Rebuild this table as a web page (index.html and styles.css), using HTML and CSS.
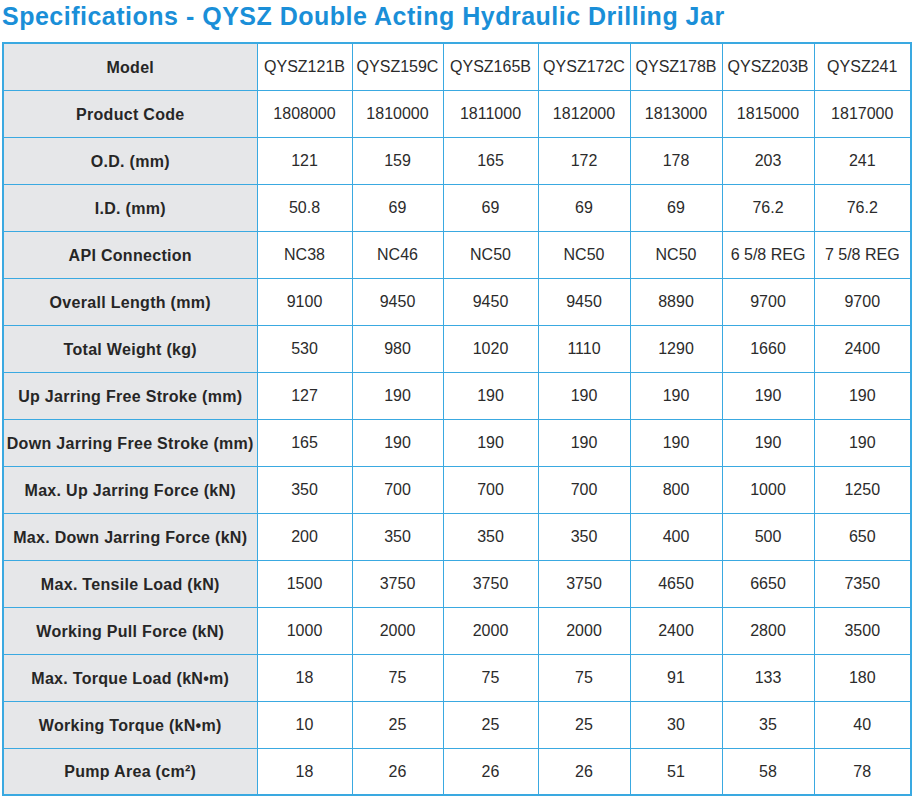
FILE: index.html
```html
<!DOCTYPE html>
<html>
<head>
<meta charset="utf-8">
<link rel="stylesheet" href="styles.css">
</head>
<body>
<h1 class="title">Specifications - QYSZ Double Acting Hydraulic Drilling Jar</h1>
<table class="spec">
<colgroup>
<col class="c-label"><col class="c1"><col class="c2"><col class="c3"><col class="c4"><col class="c5"><col class="c6"><col class="c7">
</colgroup>
<tbody>
<tr><th>Model</th><td>QYSZ121B</td><td>QYSZ159C</td><td>QYSZ165B</td><td>QYSZ172C</td><td>QYSZ178B</td><td>QYSZ203B</td><td>QYSZ241</td></tr>
<tr><th>Product Code</th><td>1808000</td><td>1810000</td><td>1811000</td><td>1812000</td><td>1813000</td><td>1815000</td><td>1817000</td></tr>
<tr><th>O.D. (mm)</th><td>121</td><td>159</td><td>165</td><td>172</td><td>178</td><td>203</td><td>241</td></tr>
<tr><th>I.D. (mm)</th><td>50.8</td><td>69</td><td>69</td><td>69</td><td>69</td><td>76.2</td><td>76.2</td></tr>
<tr><th>API Connection</th><td>NC38</td><td>NC46</td><td>NC50</td><td>NC50</td><td>NC50</td><td>6 5/8 REG</td><td>7 5/8 REG</td></tr>
<tr><th>Overall Length (mm)</th><td>9100</td><td>9450</td><td>9450</td><td>9450</td><td>8890</td><td>9700</td><td>9700</td></tr>
<tr><th>Total Weight (kg)</th><td>530</td><td>980</td><td>1020</td><td>1110</td><td>1290</td><td>1660</td><td>2400</td></tr>
<tr><th>Up Jarring Free Stroke (mm)</th><td>127</td><td>190</td><td>190</td><td>190</td><td>190</td><td>190</td><td>190</td></tr>
<tr><th>Down Jarring Free Stroke (mm)</th><td>165</td><td>190</td><td>190</td><td>190</td><td>190</td><td>190</td><td>190</td></tr>
<tr><th>Max. Up Jarring Force (kN)</th><td>350</td><td>700</td><td>700</td><td>700</td><td>800</td><td>1000</td><td>1250</td></tr>
<tr><th>Max. Down Jarring Force (kN)</th><td>200</td><td>350</td><td>350</td><td>350</td><td>400</td><td>500</td><td>650</td></tr>
<tr><th>Max. Tensile Load (kN)</th><td>1500</td><td>3750</td><td>3750</td><td>3750</td><td>4650</td><td>6650</td><td>7350</td></tr>
<tr><th>Working Pull Force (kN)</th><td>1000</td><td>2000</td><td>2000</td><td>2000</td><td>2400</td><td>2800</td><td>3500</td></tr>
<tr><th>Max. Torque Load (kN•m)</th><td>18</td><td>75</td><td>75</td><td>75</td><td>91</td><td>133</td><td>180</td></tr>
<tr><th>Working Torque (kN•m)</th><td>10</td><td>25</td><td>25</td><td>25</td><td>30</td><td>35</td><td>40</td></tr>
<tr><th>Pump Area (cm²)</th><td>18</td><td>26</td><td>26</td><td>26</td><td>51</td><td>58</td><td>78</td></tr>
</tbody>
</table>
</body>
</html>
```
FILE: styles.css
```css
html, body {
  margin: 0;
  padding: 0;
  background: #ffffff;
}
body {
  padding: 0 2px;
  font-family: "Liberation Sans", Arial, sans-serif;
}
.title {
  margin: 0;
  padding-top: 2px;
  height: 42px;
  box-sizing: border-box;
  font-size: 25px;
  line-height: 28px;
  font-weight: bold;
  letter-spacing: 0.5px;
  color: #1a8fd8;
  white-space: nowrap;
}
.spec {
  border-collapse: collapse;
  table-layout: fixed;
  width: 908px;
  border: 2px solid #3aa9e1;
}
.c-label { width: 254px; }
.c1 { width: 95px; }
.c2 { width: 91px; }
.c3 { width: 95px; }
.c4 { width: 92px; }
.c5 { width: 92px; }
.c6 { width: 92px; }
.c7 { width: 97px; }
.spec tr { height: 47px; }
.spec th, .spec td {
  border: 1px solid #3aa9e1;
  padding: 0;
  text-align: center;
  vertical-align: middle;
  font-size: 16px;
  color: #2b2b2b;
  white-space: nowrap;
  overflow: visible;
}
.spec td {
  padding-top: 1px;
}
.spec th {
  background: #e6e7e9;
  font-weight: bold;
  letter-spacing: 0.3px;
  padding-top: 2px;
  color: #262626;
}
```
